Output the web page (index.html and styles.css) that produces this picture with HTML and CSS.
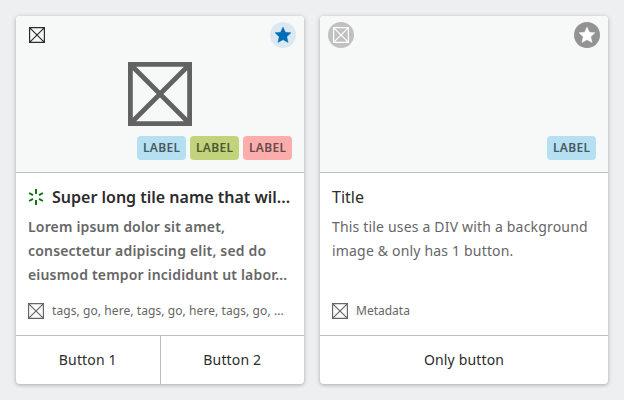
FILE: index.html
```html
<!DOCTYPE html>
<html lang="en">
<head>
<meta charset="utf-8">
<title>Tiles</title>
<link rel="stylesheet" href="styles.css">
</head>
<body>
<svg class="defs" width="0" height="0">
  <symbol id="placeholder" viewBox="0 0 16 16"><path d="M.6.6h14.800v14.800H.6zM.8.8l14.400 14.400M15.200.8L.8 15.200" fill="none" stroke="currentColor" stroke-width="1.200"/></symbol>
  <symbol id="star" viewBox="0 0 16 16"><path d="M8 0l2.400 5.300 5.600.4-4.200 4 1.300 5.800L8 12.700l-5.100 2.800 1.300-5.800L0 5.700l5.600-.4z" stroke="currentColor" stroke-width=".4" stroke-linejoin="round"/></symbol>
</svg>
<main class="tiles">
  <article class="tile">
    <header class="media">
      <div class="top">
        <span class="round plain"><svg class="icon"><use href="#placeholder"/></svg></span>
        <span class="round fav"><svg class="icon"><use href="#star"/></svg></span>
      </div>
      <svg class="picture"><use href="#placeholder"/></svg>
      <div class="badges"><span class="badge">LABEL</span><span class="badge green">LABEL</span><span class="badge red">LABEL</span></div>
    </header>
    <div class="content">
      <h2 class="title bold">
        <svg class="spark" viewBox="0 0 16 16"><path d="M8 0v5M8 11v5M1.100 4L5 6.200M11 9.800L14.900 12M1.100 12L5 9.800M11 6.200L14.900 4"/></svg>
        <span class="clip">Super long tile name that wil...</span>
      </h2>
      <p class="text strong">Lorem ipsum dolor sit amet,<br>consectetur adipiscing elit, sed do<br>eiusmod tempor incididunt ut labor...</p>
      <div class="meta"><svg class="icon"><use href="#placeholder"/></svg><span class="clip tags">tags, go, here, tags, go, here, tags, go, ...</span></div>
    </div>
    <footer class="actions"><button>Button 1</button><button>Button 2</button></footer>
  </article>
  <article class="tile">
    <header class="media">
      <div class="top">
        <span class="round muted"><svg class="icon"><use href="#placeholder"/></svg></span>
        <span class="round dark"><svg class="icon"><use href="#star"/></svg></span>
      </div>
      <div class="badges"><span class="badge">LABEL</span></div>
    </header>
    <div class="content">
      <h2 class="title"><span class="clip">Title</span></h2>
      <p class="text">This tile uses a DIV with a background image &amp; only has 1 button.</p>
      <div class="meta"><svg class="icon"><use href="#placeholder"/></svg><span class="clip">Metadata</span></div>
    </div>
    <footer class="actions"><button>Only button</button></footer>
  </article>
</main>
</body>
</html>
```
FILE: styles.css
```css
* { box-sizing: border-box; }
body { margin: 0; background: #edeff1; color: #2c2c2c; font-family: "Noto Sans", sans-serif; }
.defs { position: absolute; }
.tiles { display: flex; gap: 16px; padding: 16px; }
.tile { display: flex; flex-direction: column; width: 288px; height: 368px; background: #fff; border-radius: 4px; box-shadow: 0 1px 4px rgba(0,0,0,.3); overflow: hidden; }
.media { display: flex; flex-direction: column; height: 157px; padding: 6px 12px 12px 8px; background: #f7f9f8; border-bottom: 1px solid #b7bec7; }
.top { display: flex; justify-content: space-between; margin-right: -4px; }
.round { display: flex; align-items: center; justify-content: center; width: 26px; height: 26px; border-radius: 50%; }
.icon { display: block; flex: none; width: 16px; height: 16px; fill: currentColor; }
.fav { background: #dce8f1; color: #006db8; }
.muted { background: #c0c1c0; color: #fff; }
.dark { background: #929392; color: #fff; }
.picture { align-self: center; width: 64px; height: 64px; margin: 14px 0 0 4px; color: #626262; }
.badges { display: flex; justify-content: flex-end; gap: 4px; margin-top: auto; }
.badge { width: 49px; height: 24px; padding-left: 6px; border-radius: 4px; background: #b5e0f1; color: #48595f; font-size: 12px; font-weight: 600; line-height: 24px; letter-spacing: .3px; white-space: nowrap; }
.green { background: #c1d37b; color: #4f5735; }
.red { background: #fbadac; color: #684a4a; }
.content { display: flex; flex-direction: column; flex: 1; padding: 12px; min-height: 0; }
.title { display: flex; align-items: center; gap: 8px; margin: 0; font-size: 16px; font-weight: 400; line-height: 24px; }
.bold { font-weight: 600; }
.spark { flex: none; width: 16px; height: 16px; fill: none; stroke: #107512; stroke-width: 2; }
.clip { white-space: nowrap; }
.text { margin: 6px 0 0; color: #666; font-size: 14px; line-height: 24px; letter-spacing: .18px; }
.strong { font-weight: 600; letter-spacing: .18px; white-space: nowrap; }
.meta { display: flex; align-items: center; gap: 8px; margin-top: auto; height: 24px; color: #666; font-size: 12px; line-height: 24px; }
.tags { letter-spacing: .08px; }
.actions { display: flex; height: 49px; border-top: 1px solid #b7bec7; }
.actions button { flex: 1; padding: 0; border: 0; background: none; color: #2c2c2c; font: 14px/24px "Noto Sans", sans-serif; letter-spacing: .15px; }
.actions button + button { border-left: 1px solid #b7bec7; }
```
